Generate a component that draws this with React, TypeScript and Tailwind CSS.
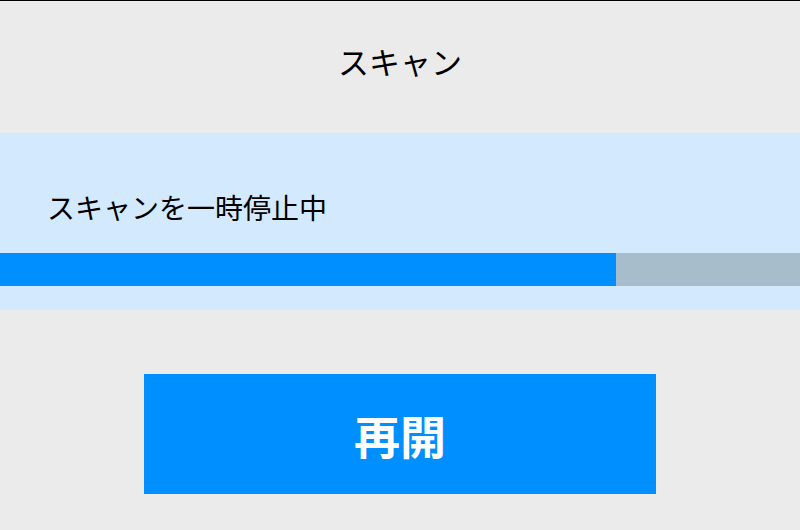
export default function App() {
  const progress = 77;
  return (
    <div
      className="w-[800px] h-[530px] bg-[#ebebeb] border-t border-black flex flex-col"
      style={{ fontFamily: '"Noto Sans CJK JP", "Noto Sans", sans-serif' }}
    >
      <div className="h-[132px] flex items-center justify-center pb-[14px]">
        <h1 className="text-[31px] text-black leading-none">スキャン</h1>
      </div>
      <div className="bg-[#d3e9fd] h-[177px] flex flex-col pt-[60px]">
        <p className="px-[47px] text-[28px] leading-none text-black">スキャンを一時停止中</p>
        <div className="mt-[32px] h-[33px] bg-[#a8bdcc] flex">
          <div className="h-full bg-[#008fff]" style={{ width: `${progress}%` }} />
        </div>
      </div>
      <div className="flex justify-center pt-[64px]">
        <button className="w-[512px] h-[120px] bg-[#008fff] text-white text-[46px] font-bold leading-none">
          再開
        </button>
      </div>
    </div>
  );
}
